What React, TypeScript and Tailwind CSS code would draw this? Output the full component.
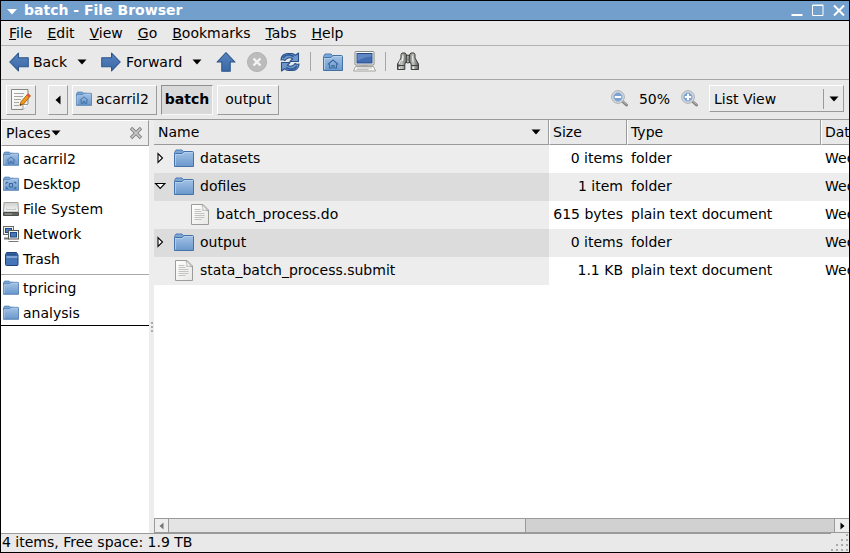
import type { ReactNode } from "react";

type IconProps = { className?: string };

function Gradients() {
  return (
    <svg className="absolute h-0 w-0" aria-hidden="true">
      <defs>
        <linearGradient id="folderBlue" x1="0" y1="0" x2="0" y2="1">
          <stop offset="0" stopColor="#a3c3e6" />
          <stop offset="1" stopColor="#6a97cb" />
        </linearGradient>
        <linearGradient id="arrowBlue" x1="0" y1="0" x2="0" y2="1">
          <stop offset="0" stopColor="#5885c0" />
          <stop offset="1" stopColor="#3a67a6" />
        </linearGradient>
        <linearGradient id="paper" x1="0" y1="0" x2="1" y2="1">
          <stop offset="0" stopColor="#ffffff" />
          <stop offset="1" stopColor="#e8e8e6" />
        </linearGradient>
        <linearGradient id="drive" x1="0" y1="0" x2="0" y2="1">
          <stop offset="0" stopColor="#d0d0cf" />
          <stop offset="1" stopColor="#fafafa" />
        </linearGradient>
        <linearGradient id="metal" x1="0" y1="0" x2="1" y2="0">
          <stop offset="0" stopColor="#62645f" />
          <stop offset="0.4" stopColor="#c4c6c1" />
          <stop offset="1" stopColor="#5c5e5a" />
        </linearGradient>
      </defs>
    </svg>
  );
}

function FolderIcon({ className, mark }: IconProps & { mark?: "home" | "desktop" }) {
  return (
    <svg viewBox="0 0 20 18" className={className} aria-hidden="true">
      <path d="M.5 3.500 2 1h6l1.500 1.500H13L12 6H.5z" fill="#7ba6d6" stroke="#4f7db1" />
      <path d="M.5 5.500Q.5 4.500 1.500 4.500H8L10 2.500H18.500Q19.500 2.500 19.500 3.500V17.500H.5Z" fill="url(#folderBlue)" stroke="#4472a8" />
      <path d="M1.500 16.500V5.500H8.500L10.500 3.500H18.500" fill="none" stroke="#b9d3ee" strokeWidth=".8" />
      {mark === "home" && (
        <path d="M4.800 11.500 10 7l5.200 4.500M6.500 11.200v3.800h2.500v-2.500h2v2.500h2.500v-3.800" fill="none" stroke="#3a699f" strokeWidth="1.100" />
      )}
      {mark === "desktop" && (
        <path d="M4 9.500V7.500H6.500M13.500 7.500H16V9.500M16 13V15H13.500M6.500 15H4V13M8 9H12V13.500H8Z" fill="none" stroke="#315f98" strokeWidth="1.200" />
      )}
    </svg>
  );
}

function ArrowIcon({ className, dir }: IconProps & { dir: "left" | "right" | "up" }) {
  const shape = {
    left: "M.7 9.500 9 1V5.500H18.300V14H9V18Z",
    right: "M18.300 9.500 10 1V5.500H.7V14H10V18Z",
    up: "M9.500 .7 18 9.500H13.500V18.300H5.500V9.500H1Z",
  }[dir];
  return (
    <svg viewBox="0 0 19 19" className={className} aria-hidden="true">
      <path d={shape} fill="url(#arrowBlue)" stroke="#2b558c" strokeLinejoin="round" />
    </svg>
  );
}

function StopIcon() {
  return (
    <svg viewBox="0 0 22 22" className="h-[22px] w-[22px]" aria-hidden="true">
      <circle cx="11" cy="11" r="9.500" fill="#bcbcbc" stroke="#b0b0b0" />
      <path d="m7.500 7.500 7 7m0-7-7 7" stroke="#f4f4f4" strokeWidth="2.300" />
    </svg>
  );
}

function ReloadIcon() {
  return (
    <svg viewBox="0 0 20 20" className="h-5 w-5" aria-hidden="true">
      <g fill="#6d96ca" stroke="#284f87" strokeWidth="1.100" strokeLinejoin="round">
        <path d="M1 8C1 4 4 1.500 8 1.500h3.500c1.500 0 3 .7 4 1.800L18.500 1v8.500H10l2.700-2.800C10 5 6.500 5.800 5 8.500 3.500 7.300 2.500 7.500 1 8Z" />
        <path d="M19 12c0 4-3 6.500-7 6.500H8.500c-1.500 0-3-.7-4-1.800L1.500 19v-8.500H10l-2.700 2.800C10 15 13.500 14.200 15 11.500c1.500 1.200 2.500 1 4 .5Z" />
      </g>
      <path d="M3 6C5 2.500 10 1.800 13.800 4.500M17 14C15 17.500 10 18.200 6.200 15.500" fill="none" stroke="#2f5c99" strokeWidth="1.600" />
    </svg>
  );
}

function ComputerIcon() {
  return (
    <svg viewBox="0 0 23 21" className="h-[21px] w-[23px]" aria-hidden="true">
      <rect x="2" y=".5" width="19" height="13.500" rx="1" fill="#fafaf8" stroke="#858782" />
      <rect x="4" y="2.500" width="15" height="9.500" fill="#426fb2" stroke="#234a86" />
      <path d="M4.500 3h14v2.500Q10 6 4.500 10Z" fill="#6288c4" />
      <path d="M8 14.500h7v1H8Z" fill="#999" />
      <path d="M2.500 15.500h18l2 4.500h-22Z" fill="#f8f8f6" stroke="#a2a4a0" />
      <path d="M4 17h15M3.500 18.500h12" stroke="#c0c1be" />
    </svg>
  );
}

function BinocularsIcon() {
  return (
    <svg viewBox="0 0 24 20" className="h-5 w-6" aria-hidden="true">
      <g fill="url(#metal)" stroke="#3c3e3b">
        <path d="M9 4.500 12 3l3 1.500V10l-3 1-3-1Z" />
        <path d="M5 2.500 6 1h3l1.500 1.500L11 8.500 8.800 12v5.500H1.500V12L5 6Z" />
        <path d="M19 2.500 18 1h-3l-1.500 1.500-.5 6 2.200 3.500v5.500h7.300V12L19 6Z" />
      </g>
      <path d="M1.500 13.500h7.300M15.200 13.500h7.300" stroke="#444643" />
      <path d="M4.500 8 3 12M16.500 4l.5 6" stroke="#e4e5e1" strokeWidth="1.200" />
      <path d="M3.500 15v2M17.500 15v2M7 3.500 6.500 9" stroke="#eceded" strokeWidth="1.400" />
    </svg>
  );
}

function NoteIcon() {
  return (
    <svg viewBox="0 0 20 21" className="h-[21px] w-5" aria-hidden="true">
      <path d="M.5 .5h16.500v14l-5 6H.5Z" fill="url(#paper)" stroke="#858783" />
      <path d="M3 4.500h10M3 7.500h9M3 10.500h7M3 13.500h5M3 16.500h5" stroke="#a5a7a3" />
      <path d="M12 20.500v-5h5" fill="#fff" stroke="#999b97" />
      <path d="m9 16.500 1-3.700 7-8 2.500 2-7 8.200Z" fill="#f39a1c" stroke="#a75b08" strokeWidth=".9" />
      <path d="m15.500 6.500 1.500-1.700 2.500 2L18 8.500Z" fill="#e2554b" />
      <path d="m9 16.500.5-1.800 1.300 1Z" fill="#222" />
    </svg>
  );
}

function DocumentIcon() {
  return (
    <svg viewBox="0 0 18 21" className="h-[21px] w-[18px]" aria-hidden="true">
      <path d="M.5 .5H12L17.500 6V20.500H.5Z" fill="url(#paper)" stroke="#9b9d98" />
      <path d="M11 1.500q1.500 2 .8 5 3-1 5 .5L12 1Z" fill="#fbfbfb" stroke="#a3a4a0" strokeWidth=".8" />
      <path d="M3.500 5.500h6M3.500 7.500h7M3.500 9.500h10M3.500 11.500h10M3.500 13.500h10M3.500 15.500h7" stroke="#c2c3bf" />
    </svg>
  );
}

function DriveIcon() {
  return (
    <svg viewBox="0 0 16 14" className="h-3.5 w-4" aria-hidden="true">
      <path d="M1 .5h14l.5 9.500H.5Z" fill="url(#drive)" stroke="#a4a5a1" />
      <path d="M3.500 8V6.500M12.500 8V6.500M4 7.500h8" fill="none" stroke="#c4c4c4" />
      <path d="M.5 10.500h15v3H.5Z" fill="#656762" stroke="#4c4e4a" />
      <path d="M2 12h7" stroke="#a4a6a1" />
    </svg>
  );
}

function NetworkIcon() {
  return (
    <svg viewBox="0 0 16 16" className="h-4 w-4" aria-hidden="true">
      <rect x=".5" y=".5" width="10" height="8" fill="#f1f1ef" stroke="#696b67" />
      <rect x="2.500" y="2.500" width="6" height="4" fill="#4e7fbf" stroke="#204a84" />
      <path d="M1 12.500h5" stroke="#777974" strokeWidth="2" />
      <rect x="5.500" y="4.500" width="10" height="8.500" fill="#f1f1ef" stroke="#5b5d59" />
      <rect x="7.500" y="6.500" width="6" height="4.500" fill="#4777b7" stroke="#204a84" />
      <path d="M5.500 15.500h10" stroke="#777974" />
    </svg>
  );
}

function TrashIcon() {
  return (
    <svg viewBox="0 0 16 14" className="h-3.5 w-4" aria-hidden="true">
      <path d="M3.500 .5h10l1.500 2.500v9.500q0 1-1 1H3.500q-1 0-1-1V3Z" fill="#4576b8" stroke="#1c4279" />
      <path d="M4 1.500h9l1 2H3.500Z" fill="#28508a" />
      <path d="M3.500 5h11" stroke="#a9c5e8" strokeWidth="1.200" />
    </svg>
  );
}

function MagnifierIcon({ plus }: { plus?: boolean }) {
  return (
    <svg viewBox="0 0 17 17" className="h-[17px] w-[17px]" aria-hidden="true">
      <path d="m11 11 4.500 4" stroke="#80827e" strokeWidth="2.800" strokeLinecap="round" />
      <path d="m11.500 11 4 3.500" stroke="#c0c1be" strokeWidth="1" />
      <circle cx="7" cy="7" r="6.300" fill="#dfe6ee" stroke="#a6a8a4" strokeWidth="1" />
      <circle cx="7" cy="7" r="4.600" fill="#7fa3d0" stroke="#a9bfdb" strokeWidth=".8" />
      <path d={plus ? "M3.800 7h6.400M7 3.800v6.400" : "M3.800 7h6.400"} stroke="#fff" strokeWidth="2" />
    </svg>
  );
}

function DownTriangle() {
  return (
    <svg viewBox="0 0 10 6" className="h-1.5 w-2.5 shrink-0" aria-hidden="true">
      <path d="M.5 .5h9L5 5.500Z" />
    </svg>
  );
}

const raised = "border border-t-white border-l-white border-r-[#9a9a9a] border-b-[#9a9a9a]";

const menus = ["File", "Edit", "View", "Go", "Bookmarks", "Tabs", "Help"];

const places: { name: string; icon: ReactNode }[] = [
  { name: "acarril2", icon: <FolderIcon mark="home" className="h-[15px] w-4" /> },
  { name: "Desktop", icon: <FolderIcon mark="desktop" className="h-[15px] w-4" /> },
  { name: "File System", icon: <DriveIcon /> },
  { name: "Network", icon: <NetworkIcon /> },
  { name: "Trash", icon: <TrashIcon /> },
];

const bookmarks = ["tpricing", "analysis"];

type Row = { name: string; size: string; type: string; kind: "folder" | "file"; state?: "open" | "closed"; child?: boolean };

const rows: Row[] = [
  { name: "datasets", size: "0 items", type: "folder", kind: "folder", state: "closed" },
  { name: "dofiles", size: "1 item", type: "folder", kind: "folder", state: "open" },
  { name: "batch_process.do", size: "615 bytes", type: "plain text document", kind: "file", child: true },
  { name: "output", size: "0 items", type: "folder", kind: "folder", state: "closed" },
  { name: "stata_batch_process.submit", size: "1.1 KB", type: "plain text document", kind: "file" },
];

function PlaceRow({ name, icon }: { name: string; icon: ReactNode }) {
  return (
    <li>
      <button className="flex h-[25px] w-full items-center gap-1 pl-0.5 text-left">
        <span className="flex w-4 justify-center">{icon}</span>
        {name}
      </button>
    </li>
  );
}

function Expander({ state }: { state?: "open" | "closed" }) {
  if (!state) return <span className="w-3" />;
  return (
    <button aria-label={state === "open" ? "Collapse" : "Expand"} className="w-3">
      <svg viewBox="0 0 12 12" className="h-3 w-3">
        <path
          d={state === "open" ? "M1.500 3.500h9.500L6.200 8.500Z" : "M4 1.500v9L8.500 6Z"}
          fill="#fff"
          stroke="#000"
          strokeWidth="1.100"
        />
      </svg>
    </button>
  );
}

function Divider() {
  return <span className="h-[19px] w-px bg-[#a6a6a6]" />;
}

function Header() {
  return (
    <>
      <header className="flex h-5 items-center border-b border-black bg-[#739fcd] pr-1 pb-0.5 pl-1.5 text-white">
        <button aria-label="Window menu" className="mr-[7px] flex w-2.5">
          <svg viewBox="0 0 10 6" className="mt-1 h-1.5 w-2.5" fill="#fff">
            <path d="M0 0h10L5 5.500Z" />
          </svg>
        </button>
        <h1 className="font-bold">batch - File Browser</h1>
        <div className="ml-auto flex gap-[9px]">
          <button aria-label="Minimize">
            <svg viewBox="0 0 12 12" className="h-3 w-3"><path d="M.5 11h11" stroke="#fff" strokeWidth="2" /></svg>
          </button>
          <button aria-label="Maximize">
            <svg viewBox="0 0 12 12" className="h-3 w-3"><path d="M.5 1.500h10.500v10H.5ZM.5 1h11" fill="none" stroke="#fff" /></svg>
          </button>
          <button aria-label="Close">
            <svg viewBox="0 0 12 12" className="h-3 w-3"><path d="m1 1.500 10 10M11 1.500 1 11.500" stroke="#fff" strokeWidth="2" /></svg>
          </button>
        </div>
      </header>
      <nav className="flex h-[25px] items-center gap-[15px] border-b border-[#b3b3b3] pl-2" aria-label="Menu">
        {menus.map((m) => (
          <button key={m}>
            <span className="underline">{m[0]}</span>
            {m.slice(1)}
          </button>
        ))}
      </nav>
      <div className="flex h-[34px] items-center border-b border-[#a6a6a6] pb-0.5 pl-2" role="toolbar">
        <button className="flex items-center gap-1">
          <ArrowIcon dir="left" className="h-5 w-5" />
          Back
        </button>
        <button aria-label="Back history" className="ml-2.5"><DownTriangle /></button>
        <button className="ml-3.5 flex items-center gap-[5px]">
          <ArrowIcon dir="right" className="h-5 w-5" />
          Forward
        </button>
        <button aria-label="Forward history" className="ml-2.5"><DownTriangle /></button>
        <button aria-label="Up" className="ml-3.5"><ArrowIcon dir="up" className="h-5 w-5" /></button>
        <button aria-label="Stop" className="ml-2.5" disabled><StopIcon /></button>
        <button aria-label="Reload" className="mr-2.5 ml-3"><ReloadIcon /></button>
        <Divider />
        <button aria-label="Home" className="ml-3"><FolderIcon mark="home" className="h-[18px] w-5" /></button>
        <button aria-label="Computer" className="mr-[9px] ml-2.5"><ComputerIcon /></button>
        <Divider />
        <button aria-label="Search" className="ml-2.5"><BinocularsIcon /></button>
      </div>
    </>
  );
}

function LocationBar() {
  return (
    <div className="flex h-10 items-center border-b border-[#9a9a9a] px-[5px]">
      <button aria-label="Edit location" className={`${raised} flex h-[30px] w-[30px] items-center justify-center`}>
        <NoteIcon />
      </button>
      <div className="ml-3 flex gap-1">
        <button aria-label="Scroll path left" className={`${raised} flex h-[30px] w-5 items-center justify-center`}>
          <svg viewBox="0 0 6 10" className="h-2.5 w-1.5"><path d="M5.500 .5v9L.5 5Z" /></svg>
        </button>
        <button className={`${raised} flex h-[30px] items-center gap-1 pr-[7px] pb-0.5 pl-[3px]`}>
          <FolderIcon mark="home" className="h-[15px] w-4" />
          acarril2
        </button>
        <button aria-pressed="true" className="h-[30px] border border-t-[#8f8f8f] border-r-[#f8f8f8] border-b-[#f8f8f8] border-l-[#8f8f8f] bg-[#d9d9d9] px-[3px] pb-0.5 font-bold">
          batch
        </button>
        <button className={`${raised} h-[30px] px-[7px] pb-0.5`}>output</button>
      </div>
      <div className="ml-auto flex items-center pb-0.5">
        <button aria-label="Zoom out"><MagnifierIcon /></button>
        <button className="mx-[11px]">50%</button>
        <button aria-label="Zoom in"><MagnifierIcon plus /></button>
        <div className={`${raised} ml-[11px] grid h-[27px] w-[135px] items-center`}>
          <select aria-label="View as" className="col-start-1 row-start-1 h-6 appearance-none bg-transparent pl-1">
            <option>List View</option>
            <option>Icon View</option>
          </select>
          <span className="pointer-events-none col-start-1 row-start-1 flex h-5 w-5 items-center justify-center justify-self-end border-l border-[#9a9a9a]">
            <DownTriangle />
          </span>
        </div>
      </div>
    </div>
  );
}

function Sidebar() {
  return (
    <aside className="w-[148px] shrink-0 bg-white">
      <div className={`${raised} flex h-[26px] items-center bg-[#ededed] pr-[5px] pl-1`}>
        <button className="flex items-center">
          Places
          <DownTriangle />
        </button>
        <button aria-label="Close sidebar" className="ml-auto">
          <svg viewBox="0 0 14 14" className="h-3.5 w-3.5">
            <path d="m2 2 10 10M12 2 2 12" stroke="#808080" strokeWidth="3.400" />
            <path d="m2.500 2.500 9 9M11.500 2.500l-9 9" stroke="#c9c9c9" strokeWidth="1.700" />
          </svg>
        </button>
      </div>
      <ul className="border-b border-[#a8a8a8] pb-[3px]">
        {places.map((p) => (
          <PlaceRow key={p.name} name={p.name} icon={p.icon} />
        ))}
      </ul>
      <ul className="border-b border-black">
        {bookmarks.map((b) => (
          <PlaceRow key={b} name={b} icon={<FolderIcon className="h-[15px] w-4" />} />
        ))}
      </ul>
    </aside>
  );
}

function FileList() {
  return (
    <main className="flex min-w-0 flex-1 flex-col bg-white">
      <div className="flex-1 overflow-hidden">
        <table className="w-[860px] table-fixed border-separate border-spacing-0">
          <colgroup>
            <col className="w-[395px]" />
            <col className="w-[78px]" />
            <col className="w-[194px]" />
            <col />
          </colgroup>
          <thead>
            <tr className="h-[25px] bg-[#e9e9e9] text-left">
              <th className="border-r border-b border-[#9a9a9a] p-0 pr-[7px] pl-1 font-normal">
                <button className="flex w-full items-center justify-between">
                  Name
                  <DownTriangle />
                </button>
              </th>
              <th className="border-r border-b border-l border-[#9a9a9a] border-l-white p-0 pl-[3px] font-normal">Size</th>
              <th className="border-r border-b border-l border-[#9a9a9a] border-l-white p-0 pl-[3px] font-normal">Type</th>
              <th className="border-b border-l border-[#9a9a9a] border-l-white p-0 pl-[3px] font-normal">Date Modified</th>
            </tr>
          </thead>
          <tbody>
            {rows.map((r, i) => (
              <tr key={r.name} className={i % 2 ? "h-7 bg-[#ededed]" : "h-7 bg-white"}>
                <td className={i % 2 ? "bg-[#dcdcdc] p-0 pb-0.5" : "bg-[#ededed] p-0 pb-0.5"}>
                  <div className={r.child ? "flex items-center pl-4" : "flex items-center"}>
                    <Expander state={r.state} />
                    <span className="mr-[5px] ml-[7px] flex h-[22px] w-[22px] items-center justify-center">
                      {r.kind === "folder" ? <FolderIcon className="h-[18px] w-5" /> : <DocumentIcon />}
                    </span>
                    {r.name}
                  </div>
                </td>
                <td className="p-0 pr-1 pb-0.5 text-right whitespace-nowrap">{r.size}</td>
                <td className="p-0 pb-0.5 pl-1">{r.type}</td>
                <td className="p-0 pb-0.5 pl-1">Wed</td>
              </tr>
            ))}
          </tbody>
        </table>
      </div>
      <div className="flex h-[15px] border border-r-0 border-[#9a9a9a] bg-[#e4e4e4]">
        <button aria-label="Scroll left" className="flex w-3.5 items-center justify-center border-r border-[#9a9a9a] bg-[#ededed]">
          <svg viewBox="0 0 5 8" className="h-2 w-[5px]"><path d="M4.500 .5v7L.5 4Z" fill="#777" /></svg>
        </button>
        <div className="flex flex-1 justify-end">
          <div className="w-[46.5%] border-x border-[#9a9a9a] bg-[#d1d1d1]" />
        </div>
        <button aria-label="Scroll right" className="flex w-3.5 items-center justify-center bg-[#ededed]">
          <svg viewBox="0 0 5 8" className="h-2 w-[5px]"><path d="M.5 .5v7L4.500 4Z" /></svg>
        </button>
      </div>
    </main>
  );
}

export default function App() {
  return (
    <div className="flex h-screen flex-col overflow-hidden border border-black bg-[#e9e9e9] font-['DejaVu_Sans',sans-serif] text-[14px] leading-5 text-black">
      <Gradients />
      <Header />
      <LocationBar />
      <div className="flex min-h-0 flex-1">
        <Sidebar />
        <div className="flex w-[5px] shrink-0 flex-col items-center justify-center gap-0.5 bg-[#ededed]">
          <span className="h-0.5 w-0.5 bg-[#aaa]" />
          <span className="h-0.5 w-0.5 bg-[#aaa]" />
          <span className="h-0.5 w-0.5 bg-[#aaa]" />
        </div>
        <FileList />
      </div>
      <footer className="flex h-[19px]">
        <p className="flex-1 border-t border-[#9a9a9a] pl-px leading-4">4 items, Free space: 1.9 TB</p>
        <svg viewBox="0 0 18 19" className="h-[19px] w-[18px]" aria-hidden="true">
          <path
            d="M15 2h2M10 7h2M15 7h2M5 12h2M10 12h2M15 12h2M0 17h2M5 17h2M10 17h2M15 17h2"
            stroke="#aaa"
            strokeWidth="2"
          />
        </svg>
      </footer>
    </div>
  );
}
